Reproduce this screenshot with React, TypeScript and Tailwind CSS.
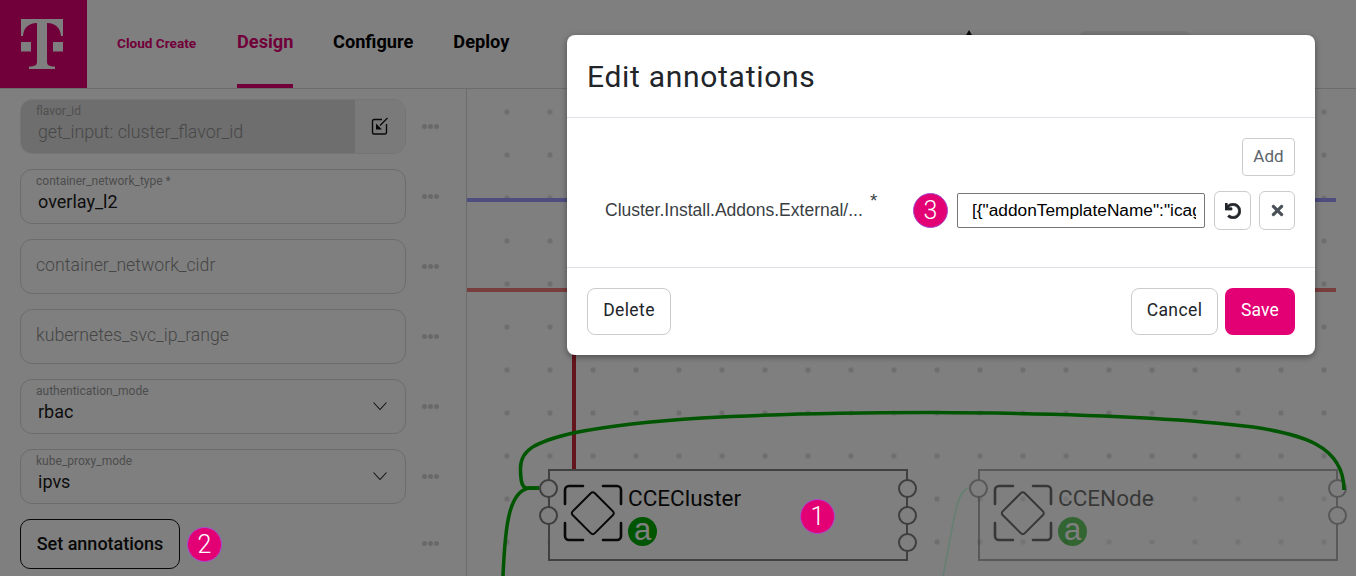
import { FaTimes, FaUndo } from "react-icons/fa";

const plex = "font-['Roboto',sans-serif]";

function Dots() {
  return (
    <div className="flex gap-[1px] ml-[16px] -mt-[1px]">
      <span className="w-[5px] h-[5px] rounded-full bg-[#d2d2d2]" />
      <span className="w-[5px] h-[5px] rounded-full bg-[#d2d2d2]" />
      <span className="w-[5px] h-[5px] rounded-full bg-[#d2d2d2]" />
    </div>
  );
}

function Badge({ n, className }: { n: number; className: string }) {
  return (
    <div className={`z-30 w-[35px] h-[35px] rounded-full bg-[#e20074] border border-[#a64fd0] text-white text-[25px] font-light leading-none flex items-center justify-center ${className}`}>
      {n}
    </div>
  );
}

function Chevron() {
  return (
    <svg width="16" height="10" viewBox="0 0 16 10" className="absolute right-[17px] top-[21px]">
      <path d="M1.5 1.5 8 8.5l6.5-7" fill="none" stroke="#222" strokeWidth="1.100" />
    </svg>
  );
}

function Field({ label, value, select }: { label?: string; value?: string; select?: boolean }) {
  return (
    <div className="flex items-center">
      <div className="relative w-[386px] h-[55px] rounded-[12px] border border-[#d8d8d8] px-[15px]">
        {label ? (
          <div className="flex flex-col pt-[2px]">
            <span className="text-[12px] leading-[18px] text-[#9a9a9a]">{label}</span>
            <span className="text-[18px] leading-[23px] ml-[2px] text-[#1a1a1a]">{value}</span>
          </div>
        ) : (
          <div className="h-full flex items-center -mt-[1px] text-[17.700px] font-light text-[#8c8c8c]">{value}</div>
        )}
        {select && <Chevron />}
      </div>
      <Dots />
    </div>
  );
}

function Port({ className }: { className: string }) {
  return <div className={`absolute w-[19px] h-[19px] rounded-full border-2 border-[#7c7c7c] bg-white ${className}`} />;
}

function NodeIcon() {
  return (
    <svg width="60" height="60" viewBox="0 0 60 60" fill="none" stroke="#111" strokeLinecap="round" strokeLinejoin="round">
      <g strokeWidth="2.600">
        <path d="M2 20V6a4 4 0 0 1 4-4h14" />
        <path d="M40 2h14a4 4 0 0 1 4 4v14" />
        <path d="M2 39v13a4 4 0 0 0 4 4h14" />
        <path d="M40 56h14a4 4 0 0 0 4-4V39" />
      </g>
      <path d="M28 9a2.500 2.500 0 0 1 3.600 0l18.400 18.400a2.500 2.500 0 0 1 0 3.600L31.600 49.400a2.500 2.500 0 0 1-3.600 0L9.600 31a2.500 2.500 0 0 1 0-3.600Z" strokeWidth="2" />
    </svg>
  );
}

function DiagramNode({ name, className, children }: { name: string; className: string; children?: React.ReactNode }) {
  return (
    <div className={`absolute top-[380px] w-[360px] h-[92px] border-2 border-[#808080] ${className}`}>
      <div className="absolute left-[13px] top-[13px]">
        <NodeIcon />
      </div>
      <div className="absolute left-[78px] top-[11px] text-[22.500px] leading-[32px] text-[#111]">{name}</div>
      <div className="absolute left-[78px] top-[46px] w-[29px] h-[29px] rounded-full bg-[#00aa00] text-white text-[31px] leading-[25px] text-center font-['Liberation_Sans',sans-serif]">
        a
      </div>
      {children}
    </div>
  );
}

export default function App() {
  return (
    <div className={`relative w-full h-[576px] overflow-hidden bg-white ${plex}`}>
      <header className="flex items-center h-[89px] border-b border-[#d8d8d8]">
        <div className="w-[87px] h-[88px] shrink-0 bg-[#e20074]">
          <svg width="87" height="88" viewBox="0 0 87 88">
            <path fill="#fff" d="M21 19H63V36H61C60.500 28 56 23.500 47 23V62C47 65 49 66.500 55 66.500V69H29V66.500C35 66.500 37 65 37 62V23C28 23.500 23.500 28 23 36H21Z" />
            <rect x="21" y="42" width="10" height="9.500" fill="#fff" />
            <rect x="53" y="42" width="10" height="9.500" fill="#fff" />
          </svg>
        </div>
        <span className="ml-[30px] w-[120px] -mt-[2px] text-[13.600px] font-bold text-[#e20074]">Cloud Create</span>
        <nav className="flex h-[88px] text-[18.200px] font-bold text-black">
          <span className="w-[56px] pt-[28px] border-b-[4px] border-[#e20074] text-[#e20074] whitespace-nowrap">Design</span>
          <span className="pt-[28px] ml-[40px]">Configure</span>
          <span className="pt-[28px] ml-[40px]">Deploy</span>
        </nav>
        <svg width="12" height="8" viewBox="0 0 12 8" className="ml-[454px] -mt-[22px]">
          <path d="M2 8 6 1l4 7Z" fill="#111" />
        </svg>
        <div className="ml-[105px] w-[110px] h-[30px] mt-[4px] rounded-[6px] bg-[#eeeeee]" />
      </header>

      <div className="flex h-[487px]">
        <aside className="w-[467px] shrink-0 border-r border-[#d8d8d8] pl-[20px] pt-[10px] flex flex-col gap-[15px]">
          <div className="flex items-center">
            <div className="flex w-[386px] h-[55px] rounded-[12px] border border-[#ebebeb] overflow-hidden">
              <div className="w-[334px] bg-[#dcdcdc] pl-[15px] pt-[2px] flex flex-col">
                <span className="text-[12px] leading-[18px] text-[#a0a0a0]">flavor_id</span>
                <span className="text-[17.800px] leading-[23px] ml-[2px] font-light text-[#909090]">get_input: cluster_flavor_id</span>
              </div>
              <div className="flex-1 bg-[#f4f4f4] flex items-center justify-center">
                <svg width="18" height="18" viewBox="0 0 18 18" fill="none" stroke="#111" className="-mt-[1px]">
                  <path d="M11 2.500H3a1.500 1.500 0 0 0-1.500 1.500v11.500A1.500 1.500 0 0 0 3 17h11a1.500 1.500 0 0 0 1.500-1.500V7" strokeWidth="1.400" />
                  <path d="M16.500 1 9 8.500" strokeWidth="1.200" />
                  <path d="M5 12.500V6.500l6 6Z" fill="#111" stroke="none" />
                </svg>
              </div>
            </div>
            <Dots />
          </div>
          <Field label="container_network_type *" value="overlay_l2" />
          <Field value="container_network_cidr" />
          <Field value="kubernetes_svc_ip_range" />
          <Field label="authentication_mode" value="rbac" select />
          <Field label="kube_proxy_mode" value="ipvs" select />
          <div className="flex items-center">
            <button className="w-[160px] h-[50px] rounded-[10px] border border-[#111] pb-[2px] text-[18px] font-medium text-[#111]">Set annotations</button>
            <Badge n={2} className="relative ml-[7px]" />
            <div className="ml-[184px]">
              <Dots />
            </div>
          </div>
        </aside>

        <main className="relative flex-1 bg-[radial-gradient(circle,#dcdcdc_2.500px,transparent_3px)] bg-[size:43px_43px] bg-[position:18.500px_1.500px]">
          <svg className="absolute left-0 top-0" width="889" height="487" viewBox="467 89 889 487" fill="none">
            <path d="M467 200H1336" stroke="#9a9aff" strokeWidth="4" />
            <path d="M467 290H1336" stroke="#f07a7a" strokeWidth="4" />
            <path d="M574 290V470" stroke="#c82838" strokeWidth="4" />
          </svg>
          <DiagramNode name="CCECluster" className="left-[81px] bg-white">
            <Port className="left-[-11px] top-[8px]" />
            <Port className="left-[-11px] top-[35px]" />
            <Port className="right-[-11px] top-[8px]" />
            <Port className="right-[-11px] top-[35px]" />
            <Port className="right-[-11px] top-[62px]" />
            <Badge n={1} className="absolute left-[250px] top-[28px]" />
          </DiagramNode>
          <DiagramNode name="CCENode" className="left-[511px] bg-white/60 opacity-60">
            <Port className="left-[-11px] top-[8px]" />
            <Port className="right-[-11px] top-[8px] bg-transparent" />
            <Port className="right-[-11px] top-[35px]" />
          </DiagramNode>
          <svg className="absolute left-0 top-0" width="889" height="487" viewBox="467 89 889 487" fill="none">
            <path d="M969 488C955 490 953 530 943 576" stroke="#d0ffe8" strokeWidth="1.800" />
            <path d="M503 576C505 530 508 490 530 488H539" stroke="#00aa00" strokeWidth="3.500" />
            <path d="M539 488H527C522 488 520.500 482 520.500 468C520.500 450 535 442 573 433C640 420 730 413 930 412.500C1060 413 1180 418 1253 427C1300 434 1344 445 1344 490" stroke="#00aa00" strokeWidth="3.500" />
          </svg>
        </main>
      </div>

      <div className="absolute inset-0 z-20 bg-black/50" />

      <div className="absolute left-[567px] top-[35px] z-30 w-[748px] h-[320px] rounded-[8px] bg-white shadow-[0_2px_6px_rgba(0,0,0,0.4)] flex flex-col">
        <div className="h-[83px] border-b border-[#dee2e6] px-[20px] flex items-center text-[#212529] text-[30px] tracking-[0.7px] font-normal">
          Edit annotations
        </div>
        <div className="h-[150px] border-b border-[#dee2e6] px-[20px] pt-[20px] flex flex-col items-end">
          <button className="w-[53px] h-[38px] rounded-[4px] border border-[#cccccc] text-[17px] text-[#5c636a]">Add</button>
          <div className="w-full flex items-center mt-[15px] h-[39px]">
            <span className="ml-[18px] w-[257px] -mt-[1px] whitespace-nowrap text-[17.500px] text-[#3a3f44] font-['Liberation_Sans',sans-serif]">Cluster.Install.Addons.External/...</span>
            <span className="ml-[8px] -mt-[18px] w-[43px] text-[19px] text-[#3a3f44] font-['Liberation_Sans',sans-serif]">*</span>
            <Badge n={3} className="shrink-0 relative" />
            <div className="ml-[9px] w-[248px] h-[35px] rounded-[2px] border border-[#767676] pl-[14px] pr-[8px] flex items-center overflow-hidden">
              <span className="overflow-hidden whitespace-nowrap text-[17.300px] text-black font-['Liberation_Sans',sans-serif]">{'[{"addonTemplateName":"icagent"}]'}</span>
            </div>
            <button className="ml-[9px] w-[37px] h-[39px] rounded-[6px] border border-[#cccccc] flex items-center justify-center text-[#212529]"><FaUndo size={16} stroke="currentColor" strokeWidth={24} /></button>
            <button className="ml-[8px] w-[36px] h-[39px] rounded-[6px] border border-[#cccccc] flex items-center justify-center text-[#495057]"><FaTimes size={17} /></button>
          </div>
        </div>
        <div className="flex-1 px-[20px] flex items-center justify-between">
          <button className="w-[84px] h-[47px] rounded-[8px] border border-[#cccccc] pb-[2px] text-[17.500px] tracking-[0.4px] text-[#212529]">Delete</button>
          <div className="flex gap-[7px]">
            <button className="w-[87px] h-[47px] rounded-[8px] border border-[#cccccc] pb-[2px] text-[17.500px] tracking-[0.4px] text-[#212529]">Cancel</button>
            <button className="w-[70px] h-[47px] rounded-[8px] bg-[#e20074] pb-[2px] text-[17.500px] tracking-[0.2px] text-white">Save</button>
          </div>
        </div>
      </div>
    </div>
  );
}
